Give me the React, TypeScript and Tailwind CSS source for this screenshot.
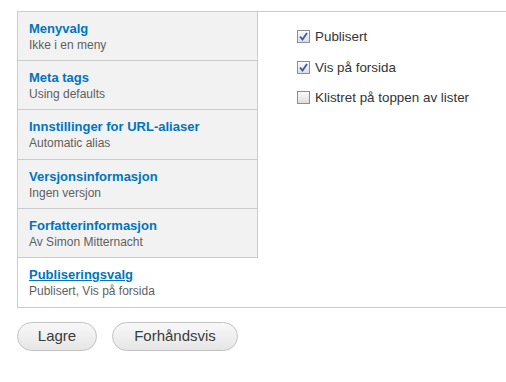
import React from "react";

interface Tab {
  title: string;
  summary: string;
  active?: boolean;
}

const tabs: Tab[] = [
  { title: "Menyvalg", summary: "Ikke i en meny" },
  { title: "Meta tags", summary: "Using defaults" },
  { title: "Innstillinger for URL-aliaser", summary: "Automatic alias" },
  { title: "Versjonsinformasjon", summary: "Ingen versjon" },
  { title: "Forfatterinformasjon", summary: "Av Simon Mitternacht" },
  { title: "Publiseringsvalg", summary: "Publisert, Vis på forsida", active: true },
];

const options = [
  { label: "Publisert", checked: true },
  { label: "Vis på forsida", checked: true },
  { label: "Klistret på toppen av lister", checked: false },
];

function CheckBox({ checked }: { checked: boolean }) {
  return (
    <span className="w-[13px] h-[13px] border border-[#8e8e8e] bg-gradient-to-b from-[#fbfbfb] to-[#dedede] flex items-center justify-center shrink-0">
      {checked && (
        <svg width="9" height="9" viewBox="0 0 9 9">
          <path d="M1 4.5 L3.5 7.5 L8 1" fill="none" stroke="#3f57a6" strokeWidth="1.8" />
        </svg>
      )}
    </span>
  );
}

export default function App() {
  return (
    <div className="bg-white w-[506px] h-[382px] pt-[11px] pl-[17px] font-['Liberation_Sans',Arial,sans-serif]">
      {/* Vertical tabs */}
      <div className="flex border-t border-b border-l border-[#cccccc]">
        <div className="w-[240px] shrink-0 flex flex-col">
          {tabs.map((t, i) => (
            <div
              key={i}
              className={`h-[49.2px] pl-[11px] pt-[9px] ${
                t.active
                  ? "bg-white"
                  : "bg-[#f2f2f2] border-r border-b border-[#cccccc]"
              }`}
            >
              <div
                className={`text-[13px] leading-[16px] font-bold text-[#0074bd] ${
                  t.active ? "underline" : ""
                }`}
              >
                {t.title}
              </div>
              <div className="text-[12px] leading-[16px] text-[#5f5f5f]">{t.summary}</div>
            </div>
          ))}
        </div>

        <div className="flex-1 pl-[39px] pt-[18px] flex flex-col gap-[17.5px]">
          {options.map((o, i) => (
            <label key={i} className="flex items-center gap-[5px] text-[13.4px] leading-[13px] text-[#333333]">
              <CheckBox checked={o.checked} />
              <span>{o.label}</span>
            </label>
          ))}
        </div>
      </div>

      {/* Actions */}
      <div className="flex gap-[15px] mt-[14px]">
        <button className="h-[29px] w-[80px] rounded-full border border-[#c2c2c2] bg-gradient-to-b from-[#f8f8f8] to-[#e6e6e6] text-[15px] text-[#3b3b3b]">
          Lagre
        </button>
        <button className="h-[29px] w-[126px] rounded-full border border-[#c2c2c2] bg-gradient-to-b from-[#f8f8f8] to-[#e6e6e6] text-[15px] text-[#3b3b3b]">
          Forhåndsvis
        </button>
      </div>
    </div>
  );
}
